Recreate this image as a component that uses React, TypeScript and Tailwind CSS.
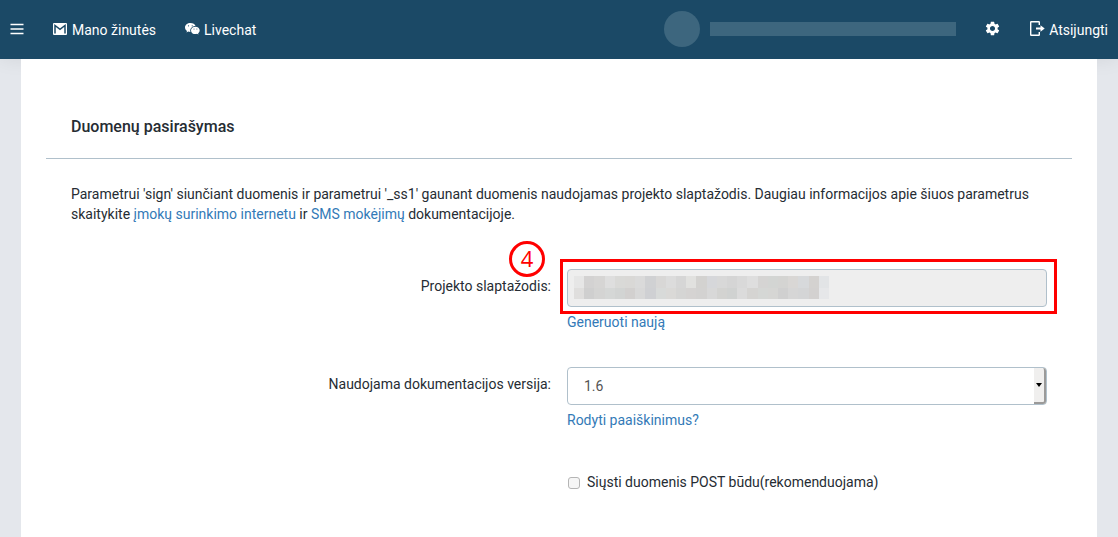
import * as React from 'react';
import { MdSettings } from 'react-icons/md';

// two rows of grey tiles that hide the project password
const maskTop = ['#e6e6e6', '#d3d2d2', '#d6d5d4', '#dedede', '#d9d9d7', '#d9d8d6', '#dadada', '#d0d1d3', '#d8d7d6', '#dcdcdc', '#d6d6d6', '#e1e1df', '#d3d2d0', '#d6d7da', '#d8d8d8', '#d5d5d5', '#d9d9d9', '#dedede', '#d5d4d3', '#d3d5d3', '#d4d4d2', '#d9d7d5', '#d7d9db', '#d4d2d0', '#e2e4e6']
const maskBottom = ['#dfdedd', '#cfcfcf', '#d4d4d3', '#d5d7d6', '#d2d4d3', '#d2d0cf', '#d8d8d8', '#cfd0d3', '#d8dad9', '#dad9d7', '#d5d5d4', '#d5d3d2', '#d3d2d1', '#d8d8d8', '#d3d3d1', '#d0d2d1', '#dbdbdb', '#d5d4d2', '#d5d7d5', '#d6d6d4', '#d0d0d0', '#d6d6d6', '#d4d5d6', '#d3d1d0', '#e6e7e9']

const MailIcon = () => (
    <svg width="14" height="12" viewBox="0 0 14 12" className="-mt-0.5" aria-hidden="true">
        <rect width="14" height="12" rx="1" fill="currentColor" />
        <path d="M2 10.500V2.500L7 6.300L12 2.500V10.500" fill="none" stroke="#1b4966" strokeWidth="1.500" />
    </svg>
)

const ChatIcon = () => (
    <svg width="15" height="12" viewBox="0 0 15 12" className="-mt-0.5" aria-hidden="true">
        <path fillRule="evenodd" fill="currentColor" d="M5.400 0C2.400 0 0 2 0 4.500C0 5.900 .8 7.100 2 7.900L1.500 9.500L3.300 8.600C4 8.800 4.700 9 5.400 8.900C4.600 5.800 7.200 3.100 10.500 3.100C10 1.300 7.900 0 5.400 0ZM3.500 2.200A.6.6 0 1 1 3.500 3.400A.6.6 0 1 1 3.500 2.200ZM7.200 2.200A.6.6 0 1 1 7.200 3.400A.6.6 0 1 1 7.200 2.200Z" />
        <path fillRule="evenodd" fill="currentColor" d="M10.400 3.700C7.900 3.700 6 5.300 6 7.400C6 9.500 7.900 11.100 10.400 11.100C11 11.100 11.500 11 12 10.800L13.500 11.600L13.100 10.200C14 9.600 14.700 8.500 14.700 7.400C14.700 5.300 12.800 3.700 10.400 3.700ZM9 5.600A.5.5 0 1 1 9 6.600A.5.5 0 1 1 9 5.600ZM11.900 5.600A.5.5 0 1 1 11.900 6.600A.5.5 0 1 1 11.900 5.600Z" />
    </svg>
)

const LogoutIcon = () => (
    <svg width="15" height="15" viewBox="0 0 15 15" fill="none" className="-mt-0.5" aria-hidden="true">
        <path d="M9.300 4V1.200Q9.300 .7 8.800 .7H1.200Q.7 .7 .7 1.200V13.800Q.7 14.300 1.200 14.300H8.800Q9.300 14.300 9.300 13.800V11" stroke="currentColor" strokeWidth="1.400" />
        <path d="M6 6.500H10.500V4.200L14.700 7.500L10.500 10.800V8.500H6Z" fill="currentColor" />
    </svg>
)

const TopBar = () => {
    return <header className="bg-[#1b4966] text-white shadow-[0_0_20px_rgba(0,0,0,0.08)]">
        <nav className="flex items-center h-[59px] px-[10px]">
            <button aria-label="Meniu" className="mr-[29px]">
                <svg width="14" height="12" viewBox="0 0 14 12" className="-mt-0.5" aria-hidden="true">
                    <path d="M.5 1.500H13.500M.5 6H13.500M.5 10.500H13.500" stroke="currentColor" strokeWidth="1.600" />
                </svg>
            </button>
            <a href="#" className="flex items-center gap-[5px]">
                <MailIcon />Mano žinutės
            </a>
            <a href="#" className="flex items-center gap-1 ml-[29px]">
                <ChatIcon />Livechat
            </a>
            <div className="flex items-center gap-[10px] ml-auto -mt-px">
                <span className="size-9 rounded-full bg-[#3d667e]"></span>
                <span className="w-[246px] h-[14px] bg-[#3d667e]"></span>
            </div>
            <button aria-label="Nustatymai" className="ml-7">
                <MdSettings size={17} className="-mt-0.5" />
            </button>
            <a href="#" className="flex items-center gap-1 ml-[29px]">
                <LogoutIcon />Atsijungti
            </a>
        </nav>
    </header>
}

const App: React.FunctionComponent = () => {
    const [version, setVersion] = React.useState('1.6')
    const [usePost, setUsePost] = React.useState(false)

    return <div className="flex flex-col min-h-screen bg-[#e4e7ec] text-sm text-[#262c33] font-[Roboto,sans-serif]">
        <TopBar />
        <main className="flex-1 mx-[21px] px-[25px] pt-14 pb-10 bg-white">
            <h1 className="px-[25px] pb-[19px] text-base leading-6 font-medium border-b border-[#b0c0cb]">Duomenų pasirašymas</h1>
            <div className="px-[25px] pt-[25px]">
                <p className="leading-5">
                    Parametrui 'sign' siunčiant duomenis ir parametrui '_ss1' gaunant duomenis naudojamas projekto slaptažodis. Daugiau informacijos apie šiuos parametrus skaitykite <a href="#" className="text-[#337ab7]">įmokų surinkimo internetu</a> ir <a href="#" className="text-[#337ab7]">SMS mokėjimų</a> dokumentacijoje.
                </p>
                <form className="grid grid-cols-2 gap-x-4 gap-y-[35px] mt-[45px] leading-5">
                    <label htmlFor="password" className="pt-[7px] text-right">Projekto slaptažodis:</label>
                    <div>
                        <div className="relative">
                            <input id="password" type="text" readOnly className="block w-full h-[38px] px-4 bg-[#eee] border border-[#b0c0cb] rounded" />
                            <div className="absolute left-[7px] top-[7px] grid grid-cols-25 w-[255px] h-[23px]">
                                {[...maskTop, ...maskBottom].map((color, index) => (
                                    <span key={index} style={{ backgroundColor: color }}></span>
                                ))}
                            </div>
                            <div className="absolute -left-[7px] -top-[10px] -bottom-[7px] -right-[10px] border-3 border-[#f00] pointer-events-none"></div>
                            <span className="absolute -left-[58px] -top-[28px] flex items-center justify-center size-9 pb-[3px] border-3 border-[#f00] rounded-full text-[22px] text-[#f00] font-['Open_Sans',sans-serif]">4</span>
                        </div>
                        <a href="#" className="inline-block mt-[5px] text-[#337ab7]">Generuoti naują</a>
                    </div>
                    <label htmlFor="version" className="pt-[7px] text-right">Naudojama dokumentacijos versija:</label>
                    <div>
                        <div className="relative">
                            <select id="version" value={version} onChange={(e) => setVersion(e.target.value)} className="block w-full h-[38px] px-4 appearance-none bg-white border border-[#b0c0cb] rounded text-[#555]">
                                <option value="1.6">1.6</option>
                                <option value="1.5">1.5</option>
                            </select>
                            <span className="absolute right-px inset-y-px flex items-center justify-center w-3 bg-[#f0efee] border-r-2 border-b-2 border-[#9b9a99] rounded-r-[3px] pointer-events-none">
                                <svg width="6" height="4" viewBox="0 0 6 4"><path d="M0 0H6L3 4Z" fill="#000" /></svg>
                            </span>
                        </div>
                        <a href="#" className="inline-block mt-[5px] text-[#337ab7]">Rodyti paaiškinimus?</a>
                    </div>
                    <div className="col-start-2 flex items-center gap-[7px] mt-[7px]">
                        <input id="post" type="checkbox" checked={usePost} onChange={(e) => setUsePost(e.target.checked)} className="size-3 ml-px mt-px appearance-none rounded-[3px] border border-[#b5b5b5] bg-[#f6f6f6] checked:bg-[#337ab7]" />
                        <label htmlFor="post">Siųsti duomenis POST būdu(rekomenduojama)</label>
                    </div>
                </form>
            </div>
        </main>
    </div>;
};

export default App;
